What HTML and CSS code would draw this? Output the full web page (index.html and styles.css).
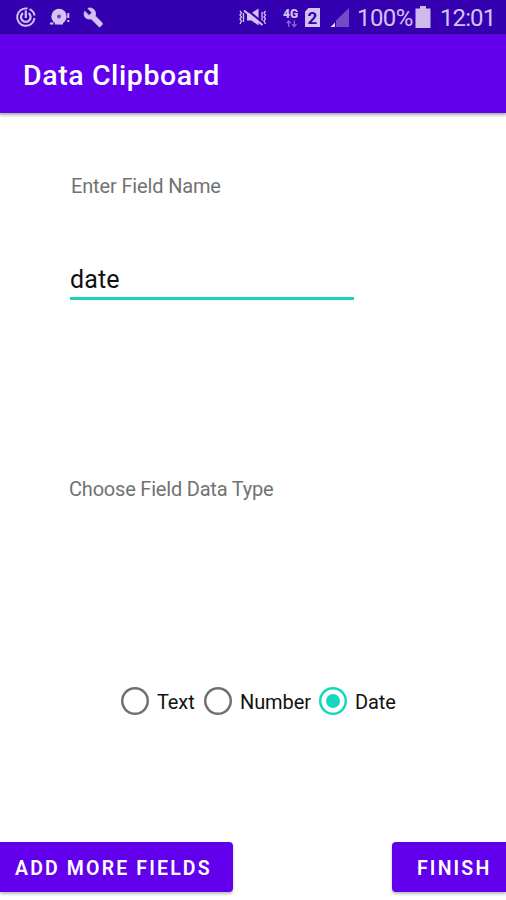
FILE: index.html
```html
<!DOCTYPE html>
<html lang="en">
<head>
<meta charset="utf-8">
<title>Data Clipboard</title>
<link rel="stylesheet" href="styles.css">
</head>
<body>
<div class="screen">
  <div class="status">
    <svg class="status-left" width="120" height="34" viewBox="0 0 120 34" fill="none" stroke="#d3c2f2" stroke-width="2">
      <path d="M27.500 8.600A8.700 8.700 0 1 0 34.500 18M29.500 9.200A8.700 8.700 0 0 1 34.600 15.500"/>
      <path d="M23 13.200A4.800 4.800 0 1 0 28.600 13.200M25.800 10.500V18" stroke-width="2.200"/>
      <circle cx="59" cy="16.500" r="7.700" fill="#d3c2f2" stroke="none"/>
      <circle cx="59" cy="16.500" r="2" fill="#6841bd" stroke="none"/>
      <path d="M50 23.500h3.500M55 23.500h8M68.300 13v5M68.300 20v2"/>
      <path d="M86.300 8.300l4.200 4.200 3-3-4.200-4.100c4.300-1.600 9 2 7.500 7.500l6.300 6.400c1.300 1.200.9 2 .1 2.800l-2.100 2.100-8.500-8.400c-5.300 1.500-8.500-3.200-6.300-7.500z" fill="#d3c2f2" stroke="#d3c2f2" stroke-width=".8" transform="translate(-1.500 3)"/>
    </svg>
    <svg class="status-right" width="120" height="34" viewBox="235 0 120 34" fill="none" stroke="#d3c2f2">
      <path d="M240 11l1.500 2-1.500 2 1.500 2-1.500 2 1.500 2-1.500 3M243.500 13v9M265.500 11l-1.500 2 1.500 2-1.500 2 1.500 2-1.500 2 1.500 3M262 12v9" stroke-width="1.300"/>
      <path d="M247 13h4.500l7-4.500v17l-7-5H247z" fill="#d3c2f2" stroke="none"/>
      <path d="M246 9l16 13" stroke="#3500b0" stroke-width="2"/>
      <path d="M244 10.500l18.500 14.500" stroke-width="2"/>
      <text class="network" x="283" y="17.500">4G</text>
      <path d="M288.700 27v-6m-2.200 2.200l2.200-2.200 2.200 2.200M294.300 20.500v6m-2.200-2.200l2.200 2.200 2.200-2.200" stroke="#8c68d5" stroke-width="1.300"/>
      <path d="M308.500 8H320v19h-15V11.500z" fill="#d3c2f2" stroke="none"/>
      <text class="sim" x="307.500" y="23.500">2</text>
      <path d="M349 8v19h-13v-6.500z" fill="#7549c7" stroke="none"/>
      <path d="M335 22.500V27h-4.500z" fill="#e5d9f8" stroke="none"/>
    </svg>
    <span class="percent">100%</span>
    <svg class="battery" width="16" height="22" viewBox="0 0 16 22"><path d="M5 0h6v2.500h4.500V22H.5V2.500H5z" fill="#cdbbed"/></svg>
    <span class="clock">12:01</span>
  </div>
  <header class="appbar"><h1>Data Clipboard</h1></header>
  <main>
    <label class="caption name-caption" for="field">Enter Field Name</label>
    <input class="field" id="field" type="text" value="date" spellcheck="false">
    <div class="caption type-caption">Choose Field Data Type</div>
    <div class="options">
      <label class="option text"><i class="radio"></i><span>Text</span></label>
      <label class="option number"><i class="radio"></i><span>Number</span></label>
      <label class="option date"><i class="radio selected"></i><span>Date</span></label>
    </div>
    <div class="actions">
      <button class="add">ADD MORE FIELDS</button>
      <button class="finish">FINISH</button>
    </div>
  </main>
</div>
</body>
</html>
```
FILE: styles.css
```css
* { box-sizing: border-box; }
body { margin: 0; background: #fff; font-family: Roboto, sans-serif; }
.screen { width: 506px; height: 900px; overflow: hidden; display: flex; flex-direction: column; }
.status { height: 34px; flex: none; background: #3500b0; display: flex; color: #d3c2f2; font-size: 24px; line-height: 37px; white-space: nowrap; }
.status svg { flex: none; }
.status-right { margin-left: 115px; }
.percent { width: 57px; margin-left: 2px; letter-spacing: -0.6px; }
.battery { margin: 6px 0 0 1px; }
.clock { margin-left: 9px; letter-spacing: -0.9px; }
.network { font: 900 12px Roboto, sans-serif; fill: #d3c2f2; stroke: none; }
.sim { font: 700 17px Roboto, sans-serif; fill: #3500b0; stroke: none; }
.appbar { height: 79px; flex: none; background: #6200ee; padding-left: 23px; box-shadow: 0 1px 3px 1px #0005; }
h1 { margin: 0; color: #fff; font-size: 28.5px; font-weight: 500; line-height: 83px; letter-spacing: 0.6px; }
main { display: flex; flex-direction: column; align-items: flex-start; }
.caption { color: #727272; font-size: 20px; line-height: 24px; letter-spacing: -0.15px; white-space: nowrap; }
.name-caption { margin: 61px 0 0 71px; }
.field { width: 284px; height: 42px; margin: 60px 0 0 70px; padding: 3px 0 0; border: 0; border-bottom: 2.5px solid #1dd3b9; border-bottom-width: 3px; border-radius: 0; outline: 0; font: 25px Roboto, sans-serif; letter-spacing: 0.1px; color: #111; background: transparent; }
.type-caption { margin: 177px 0 0 69px; letter-spacing: -0.2px; }
.options { display: flex; margin: 185px 0 0 120.5px; height: 30px; }
.option { display: flex; align-items: center; gap: 8px; font-size: 20px; letter-spacing: -0.1px; color: #111; white-space: nowrap; }
.option span { padding-top: 2px; }
.text { width: 83px; }
.number { width: 115px; }
.radio { width: 28.5px; height: 28.5px; flex: none; border-radius: 50%; display: grid; place-items: center; box-shadow: inset 0 0 0 2.5px #707070; }
.selected { box-shadow: inset 0 0 0 2.5px #12d8c2; }
.selected::after { content: ""; width: 14.5px; height: 14.5px; border-radius: 50%; background: #12d8c2; }
.actions { width: 506px; display: flex; justify-content: space-between; margin-top: 126px; }
button { height: 50px; border: 0; padding: 3px 0 0; background: #6200ee; color: #fff; font: 600 19.5px/47px Roboto, sans-serif; letter-spacing: 2.15px; text-align: left; white-space: nowrap; box-shadow: 0 2px 3px #0004; }
.add { width: 233px; padding-left: 15px; border-radius: 0 4px 4px 0; }
.finish { width: 114px; padding-left: 25px; border-radius: 4px 0 0 4px; }
```
